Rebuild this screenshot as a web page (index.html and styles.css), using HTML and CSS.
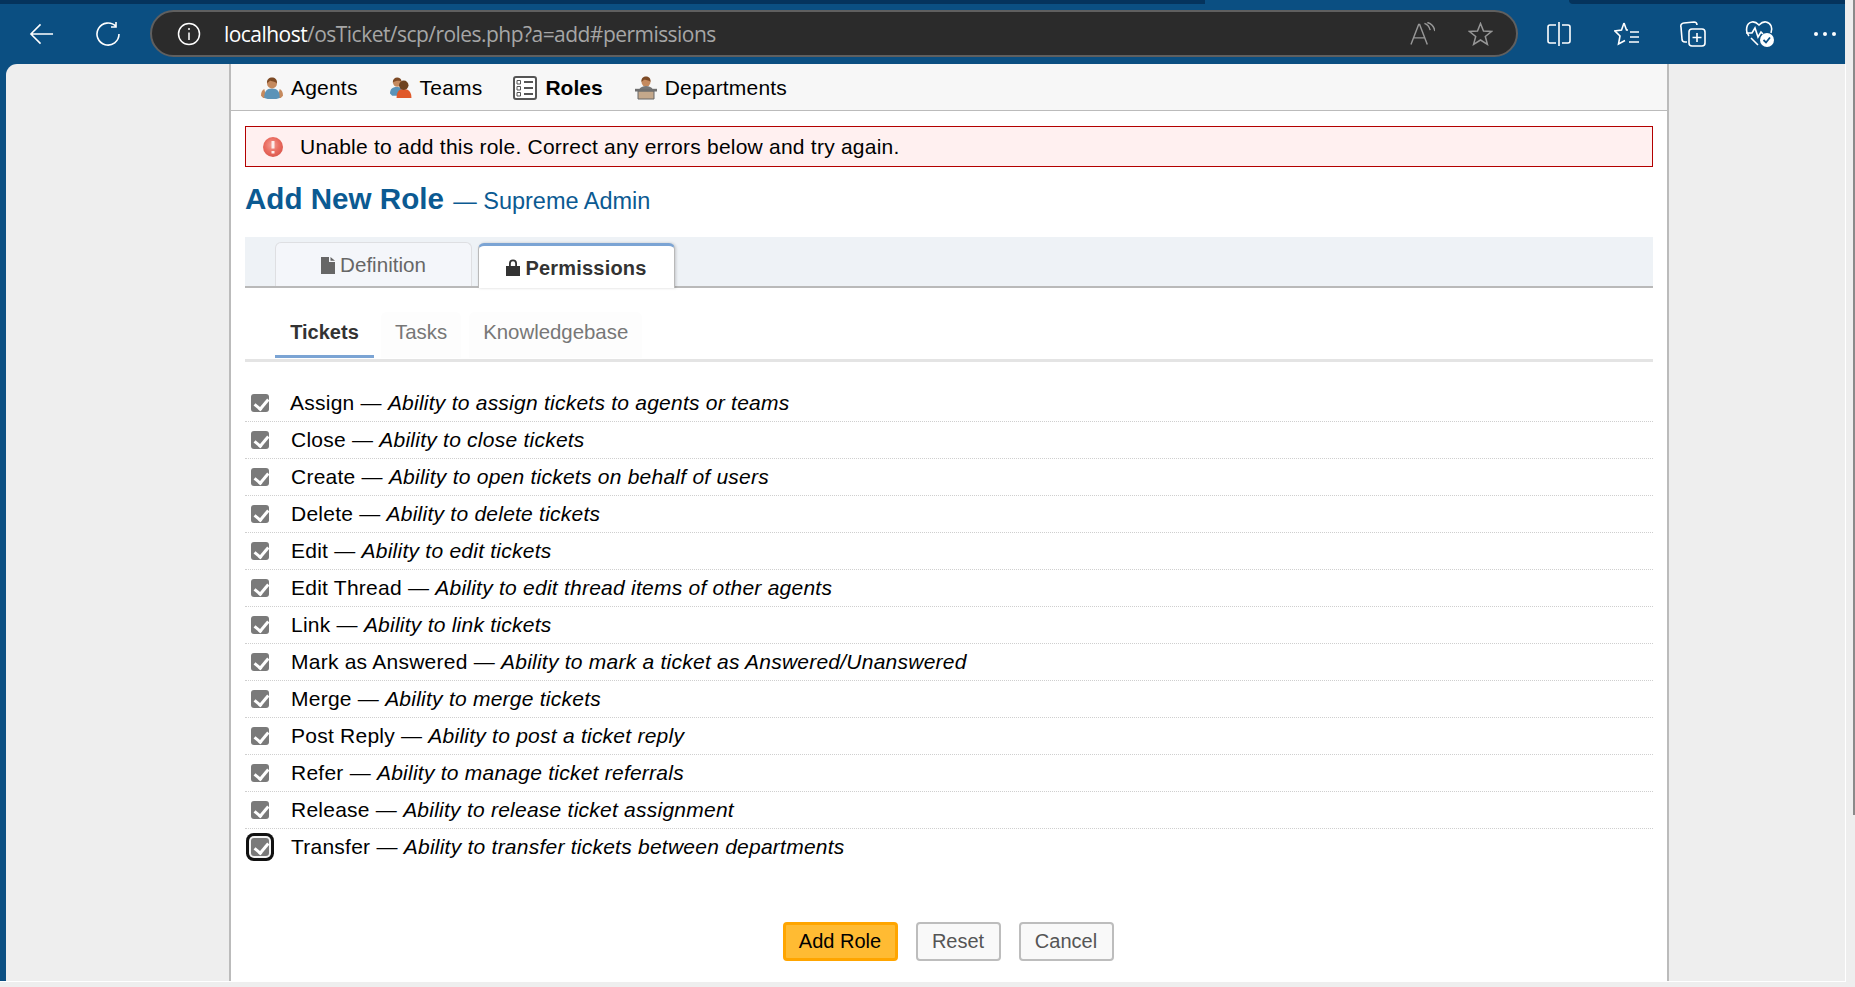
FILE: index.html
```html
<!DOCTYPE html>
<html lang="en">
<head>
<meta charset="utf-8">
<title>osTicket roles</title>
<link rel="stylesheet" href="styles.css">
</head>
<body>
<div class="window">
  <div class="main">
    <header class="chrome">
      <div class="tabstrip"><div class="strip-a"></div><div class="strip-b"></div></div>
      <div class="toolbar">
        <svg class="ti back" viewBox="0 0 26 24"><path d="M25 12H2M12 2 2 12l10 10"/></svg>
        <svg class="ti reload" viewBox="0 0 26 26"><path d="M21 5.500A11 11 0 1 0 24 13M21 1v5h-5"/></svg>
        <div class="addr">
          <svg class="info" viewBox="0 0 24 24"><circle cx="12" cy="12" r="10.500"/><path d="M12 10.500V18M12 6v2"/></svg>
          <span class="url"><b>localhost</b>/osTicket/scp/roles.php?a=add#permissions</span>
          <svg class="gi" viewBox="0 0 26 24"><path d="M1 23 9 2h1l8 21M4 16h11M15 1c3 1 5 3 6 7M18 0c4 1 7 4 8 9"/></svg>
          <svg class="gi star" viewBox="0 0 24 24"><path d="M12 1.500 15 9l8 .5-6.200 5 2.100 7.800L12 18l-6.900 4.300 2.100-7.800L1 9.500 9 9z"/></svg>
        </div>
        <svg class="ti split" viewBox="0 0 24 26"><path d="M9 4H3a2 2 0 0 0-2 2v14a2 2 0 0 0 2 2h6M15 4h6a2 2 0 0 1 2 2v14a2 2 0 0 1-2 2h-6M12 1v24"/></svg>
        <svg class="ti favs" viewBox="0 0 26 26"><path d="M10 2 7.500 9 1 10l5 5-1.500 8L11 19.500M10 2l2.500 7H14M16 11h9M16 16h9M15 21h10"/></svg>
        <svg class="ti colls" viewBox="0 0 26 26"><path d="M7 21H5a3 3 0 0 1-3-3L1 6a3 3 0 0 1 3-4l10-1a3 3 0 0 1 3 3"/><rect x="9" y="8" width="16" height="17" rx="3"/><path d="M17 12v9M12.500 16.500h9"/></svg>
        <svg class="ti health" viewBox="0 0 30 28"><path d="M4 16C0 11 1 3 7 2c3-.5 5 1 7 3 2-2 4-3.500 7-3 5 1 7 6 5 11M1 13h6l3-5 3 9 3-5 2 2M6 18l7 7"/><circle class="badge" cx="22" cy="20" r="7"/><path class="tick" d="m18.500 20 2.500 2.500 4-5"/></svg>
        <div class="dots"><i></i><i></i><i></i></div>
      </div>
    </header>
    <main class="panel">
      <div class="sheet">
        <nav class="subnav">
          <a class="navitem">
            <svg class="ni" viewBox="0 0 20 20"><path class="skin" d="M0 17c0-3 1-5 3-6l2 8H2zM20 17c0-3-1-5-3-6l-2 8h3z"/><path class="blue" d="M3 19c0-6 2-8.500 7-8.500s7 2.500 7 8.500l-3 1H6z"/><circle class="skin" cx="10" cy="6" r="4.500"/><path class="hair" d="M5.500 6c-.5-4 2-5.500 4.500-5.500S15 2 14.500 6C13 4 9 4 8 3.500 7 5 6 5 5.500 6z"/></svg>
            <span>Agents</span>
          </a>
          <a class="navitem">
            <svg class="ni" viewBox="0 0 20 20"><path class="blue" d="M0 15c0-4 2-6 6-6s7 2 7 6l-3 2H2z"/><circle class="skin" cx="6.500" cy="5" r="3.800"/><path class="hair" d="M2.500 5c0-3 2-4.500 4-4.500S10.500 2 10.500 4C9 3 5 3 2.500 5z"/><path class="orange" d="M6 19c0-5 2-8 6.500-8s7 3 7 8z"/><circle class="dark" cx="12.500" cy="7.500" r="4.300"/></svg>
            <span>Teams</span>
          </a>
          <a class="navitem active">
            <svg class="ni list" viewBox="0 0 24 24"><rect x="1" y="1" width="22" height="22" rx="2"/><path d="M11 6h9M11 12h9M11 18h9"/><path class="thin" d="M4 4.500h3.500V8H4zM4 10.500h3.500V14H4zM4 16.500h3.500V20H4z"/></svg>
            <span>Roles</span>
          </a>
          <a class="navitem">
            <svg class="ni tall" viewBox="0 0 22 24"><circle class="skin" cx="11" cy="6" r="4.500"/><path class="hair" d="M6.500 6c-.5-4 2-5.500 4.500-5.500S16 2 15.500 6C14 4 10 4 9 3.500 8 5 7 5 6.500 6z"/><path class="coat" d="M4 14c1-3 4-4 7-4s6 1 7 4z"/><path class="desk" d="M3 15h16v8H3z"/><path class="deskb" d="M0 12.800h22v2.700H0z"/></svg>
            <span>Departments</span>
          </a>
        </nav>
        <div class="content">
          <div class="error">
            <svg class="err" viewBox="0 0 22 22"><defs><radialGradient id="eg" cx=".45" cy=".4" r=".65"><stop offset="0" stop-color="#f3a097"/><stop offset=".55" stop-color="#ea6c60"/><stop offset="1" stop-color="#d9564c"/></radialGradient></defs><circle fill="url(#eg)" cx="11" cy="11" r="10"/><path class="errm" d="M11 5v7.500M11 15v2.500"/></svg>
            <span>Unable to add this role. Correct any errors below and try again.</span>
          </div>
          <h2 class="title">Add New Role <small>— Supreme Admin</small></h2>
          <div class="tabs">
            <div class="tab"><svg class="ticon" viewBox="0 0 14 17"><path d="M0 0h8v5h6v12H0zM9.500 0 14 3.800H9.500z"/></svg>Definition</div>
            <div class="tab current"><svg class="ticon lock" viewBox="0 0 14 17"><path d="M0 7h14v10H0zM3 7V4.500a4 4 0 0 1 8 0V7H9.200V4.500a2.200 2.200 0 0 0-4.400 0V7z"/></svg>Permissions</div>
          </div>
          <div class="subtabs">
            <div class="stab on">Tickets</div>
            <div class="stab">Tasks</div>
            <div class="stab">Knowledgebase</div>
          </div>
          <ul class="perms">
            <li class="first"><span class="cb"></span><span>Assign — <em>Ability to assign tickets to agents or teams</em></span></li>
            <li><span class="cb"></span><span>Close — <em>Ability to close tickets</em></span></li>
            <li><span class="cb"></span><span>Create — <em>Ability to open tickets on behalf of users</em></span></li>
            <li><span class="cb"></span><span>Delete — <em>Ability to delete tickets</em></span></li>
            <li><span class="cb"></span><span>Edit — <em>Ability to edit tickets</em></span></li>
            <li><span class="cb"></span><span>Edit Thread — <em>Ability to edit thread items of other agents</em></span></li>
            <li><span class="cb"></span><span>Link — <em>Ability to link tickets</em></span></li>
            <li><span class="cb"></span><span>Mark as Answered — <em>Ability to mark a ticket as Answered/Unanswered</em></span></li>
            <li><span class="cb"></span><span>Merge — <em>Ability to merge tickets</em></span></li>
            <li><span class="cb"></span><span>Post Reply — <em>Ability to post a ticket reply</em></span></li>
            <li><span class="cb"></span><span>Refer — <em>Ability to manage ticket referrals</em></span></li>
            <li><span class="cb"></span><span>Release — <em>Ability to release ticket assignment</em></span></li>
            <li class="last"><span class="cb focus"></span><span>Transfer — <em>Ability to transfer tickets between departments</em></span></li>
          </ul>
          <div class="actions">
            <button class="btn primary">Add Role</button>
            <button class="btn reset">Reset</button>
            <button class="btn cancel">Cancel</button>
          </div>
        </div>
      </div>
    </main>
  </div>
  <div class="scrollgut"><div class="thumb"></div></div>
</div>
</body>
</html>
```
FILE: styles.css
```css
* { box-sizing: border-box; }
html, body { margin: 0; height: 100%; overflow: hidden; }
body { background: #eeeeee; font-family: "Liberation Sans", Arial, sans-serif; color: #000; }
.window { display: flex; height: 987px; }
.main { width: 1846px; flex: none; display: flex; flex-direction: column; }

.chrome { height: 64px; flex: none; width: 1845px; background: #0b4f82; }
.tabstrip { display: flex; height: 4px; }
.strip-a { width: 1205px; background: #05335c; }
.strip-b { margin-left: 364px; width: 276px; background: #05335c; border-bottom-left-radius: 4px; }
.toolbar { display: flex; align-items: center; height: 60px; padding-left: 29px; padding-bottom: 1px; }
.ti { fill: none; stroke: #fff; stroke-width: 1.600; flex: none; }
.back { width: 25px; height: 24px; margin-right: 41px; }
.reload { width: 26px; height: 26px; margin-right: 29px; }
.addr { width: 1368px; height: 47px; margin-right: 29px; flex: none; display: flex; align-items: center; background: #2b2b2b; border: 2px solid #5f5f5f; border-radius: 24px; padding-left: 25px; }
.info { width: 24px; height: 24px; fill: none; stroke: #fff; stroke-width: 1.500; flex: none; }
.url { margin-left: 23px; padding-top: 2px; width: 1186px; flex: none; font: 21px/1 "Open Sans", sans-serif; letter-spacing: -.54px; color: #a6a6a6; }
.url b { font-weight: 400; color: #fff; }
.gi { width: 25px; height: 24px; fill: none; stroke: #979797; stroke-width: 1.500; flex: none; }
.star { margin-left: 33px; }
.split { width: 24px; height: 26px; margin-right: 43px; }
.favs { width: 26px; height: 26px; margin-right: 40px; }
.colls { width: 26px; height: 26px; margin-right: 39px; }
.health { width: 30px; height: 28px; margin-right: 39px; }
.badge { fill: #fff; stroke: none; }
.tick { stroke: #0b4f82; stroke-width: 1.800; }
.dots { display: flex; gap: 5px; }
.dots i { width: 4px; height: 4px; border-radius: 50%; background: #fff; }

.panel { height: 918px; flex: none; background: #0b4f82; border-right: 1px solid #fff; border-bottom: 1px solid #fff; overflow: hidden; padding-left: 6px; }
.sheet { height: 100%; background: #eeeeee; border-top-left-radius: 11px; padding-left: 223px; }
.scrollgut { flex: 1; display: flex; justify-content: flex-end; }
.thumb { width: 2px; height: 815px; background: #8a8a8a; }

.subnav, .content { width: 1440px; border-left: 2px solid #bbbbbb; border-right: 2px solid #bbbbbb; }
.subnav { height: 47px; background: #f7f7f7; border-bottom: 1px solid #bbbbbb; display: flex; align-items: center; padding-left: 30px; padding-top: 2px; gap: 32px; }
.navitem { display: flex; align-items: center; gap: 8px; font-size: 21px; letter-spacing: .2px; }
.navitem.active { font-weight: 700; letter-spacing: 0; margin-left: -1px; }
.ni { width: 22px; height: 22px; flex: none; }
.ni.list { width: 24px; height: 24px; }
.ni.tall { height: 24px; }
.blue { fill: #5b93b8; } .skin { fill: #c58a5e; } .hair { fill: #7d4a25; }
.orange { fill: #e0592a; } .dark { fill: #6e4421; } .coat { fill: #777; }
.desk { fill: #c4a88b; stroke: #666; } .deskb { fill: #6f6f6f; }
.list { fill: #fff; stroke: #555; stroke-width: 2; }
.list .thin { stroke-width: 1; fill: none; }

.content { height: 870px; background: #fff; padding: 15px 14px 0; }
.error { height: 41px; background: #fff0f0; border: 1px solid #b30000; display: flex; align-items: center; padding-left: 16px; font-size: 21px; letter-spacing: .23px; }
.err { width: 22px; height: 22px; margin-right: 16px; flex: none; }
.errm { stroke: #fdecea; stroke-width: 3; fill: none; }
.title { margin: 16px 0 0; height: 54px; font-size: 29.600px; line-height: 32px; font-weight: 700; color: #0b5a92; }
.title small { font-size: 23.500px; font-weight: 400; margin-left: 1px; }

.tabs { height: 51px; background: #eef2f6; border-bottom: 2px solid #b9b9b9; display: flex; align-items: flex-end; padding-left: 30px; gap: 6px; }
.tab { width: 197px; height: 44px; background: #f4f6fa; border: 1px solid #dedfe2; border-bottom: 0; border-radius: 6px 6px 0 0; display: flex; align-items: center; justify-content: center; gap: 5px; font-size: 20.600px; color: #666; padding-top: 1px; }
.ticon { width: 14px; height: 17px; fill: #666; }
.tab.current { height: 45px; margin-bottom: -2px; background: #fff; border: 1px solid #b9b9b9; border-top: 3px solid #7ba4d4; border-bottom: 0; font-size: 20px; font-weight: 700; color: #333; box-shadow: 1px 0 3px rgba(0,0,0,.18); letter-spacing: .2px; padding-top: 3px; position: relative; }
.tab.current .ticon { fill: #333; }
.ticon.lock { margin-top: -2px; }

.subtabs { height: 74px; display: flex; align-items: flex-start; padding: 24px 0 0 30px; border-bottom: 3px solid #e4e4e4; }
.stab { height: 46px; padding: 9px 14px 0; font-size: 20.400px; color: #777; margin-right: 8px; background: #fdfdfd; border-radius: 6px 6px 0 0; }
.stab.on { width: 99px; padding: 9px 0 0; text-align: center; font-size: 20px; font-weight: 700; color: #333; background: none; border-bottom: 3px solid #7ba4d4; margin-right: 7px; border-radius: 0; }

.perms { list-style: none; margin: 23px 0 0; padding: 0; }
.perms li { height: 37px; border-bottom: 1px dotted #cfcfcf; display: flex; align-items: center; font-size: 21px; letter-spacing: .24px; padding-left: 6px; gap: 22px; }
.perms li.last { border-bottom-color: transparent; }
.perms li.first > span:last-child { margin-left: -1px; }
.perms em { font-style: italic; }
.cb { width: 18px; height: 18px; flex: none; border-radius: 3px; background: #7a7a7a; position: relative; }
.cb::after { content: ""; position: absolute; left: 6px; top: 2px; width: 6px; height: 11px; border: solid #fff; border-width: 0 3px 3px 0; transform: rotate(40deg); }
.cb.focus { box-shadow: 0 0 0 2px #f4f4f4, 0 0 0 5px #111; border-radius: 3px; }

.actions { display: flex; justify-content: center; gap: 18px; margin: 56px 0 0; padding-right: 2px; }
.btn { height: 39px; font: 20px "Liberation Sans", Arial, sans-serif; color: #555; background: #f9f9f9; border: 2px solid #bdbdbd; border-radius: 4px; padding: 0; }
.btn.reset { width: 85px; }
.btn.cancel { width: 95px; }
.btn.primary { width: 115px; color: #000; background: #ffbb33; border: 3px solid #ffa500; }
```
